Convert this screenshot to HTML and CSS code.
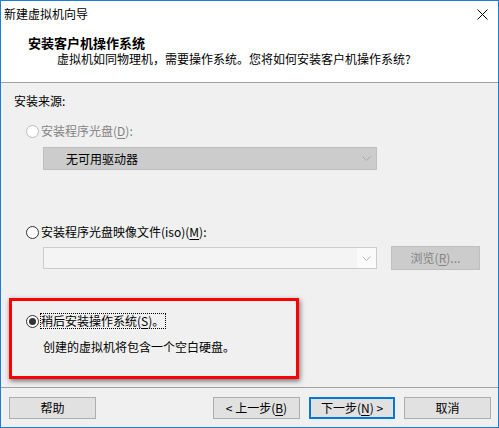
FILE: index.html
```html
<!DOCTYPE html>
<html lang="zh-CN">

<head>
    <meta charset="UTF-8">
    <title>新建虚拟机向导</title>
    <link rel="stylesheet" href="styles.css">
</head>

<body>
    <div class="window">
        <div class="titlebar">
            <span class="title">新建虚拟机向导</span>
            <svg class="close" width="11" height="11" viewBox="0 0 11 11">
                <path d="M0.5 0.5L10.5 10.5M10.5 0.5L0.5 10.5" stroke="#000" stroke-width="1" fill="none" />
            </svg>
        </div>
        <div class="header">
            <div class="heading">安装客户机操作系统</div>
            <div class="subheading">虚拟机如同物理机，需要操作系统。您将如何安装客户机操作系统?</div>
        </div>

        <div class="content">
            <div class="label">安装来源:</div>

            <div class="option option-disc disabled">
                <span class="radio"></span>
                <span>安装程序光盘(<u>D</u>):</span>
            </div>
            <div class="combo combo-off">
                <span class="combo-text">无可用驱动器</span>
                <svg class="chevron" width="9" height="5" viewBox="0 0 9 5">
                    <path d="M0.5 0.5L4.5 4.5L8.5 0.5" stroke="#a8a8a8" fill="none" />
                </svg>
            </div>

            <div class="option option-iso">
                <span class="radio"></span>
                <span>安装程序光盘映像文件(iso)(<u>M</u>):</span>
            </div>
            <div class="file-row">
                <div class="combo combo-edit">
                    <span class="field"></span>
                    <span class="drop">
                        <svg class="chevron" width="9" height="5" viewBox="0 0 9 5">
                            <path d="M0.5 0.5L4.5 4.5L8.5 0.5" stroke="#b4b4b4" fill="none" />
                        </svg>
                    </span>
                </div>
                <button class="btn btn-off">浏览(<u>R</u>)...</button>
            </div>

            <div class="later">
                <div class="option option-later">
                    <span class="radio checked"></span>
                    <span class="focus">稍后安装操作系统(<u>S</u>)。</span>
                </div>
                <div class="desc">创建的虚拟机将包含一个空白硬盘。</div>
            </div>
        </div>

        <div class="footer">
            <button class="btn">帮助</button>
            <div class="nav">
                <button class="btn">&lt; 上一步(<u>B</u>)</button>
                <button class="btn btn-default">下一步(<u>N</u>) &gt;</button>
                <button class="btn">取消</button>
            </div>
        </div>
    </div>
</body>

</html>
```

FILE: styles.css
```css
body {
    margin: 0;
    background-color: #ffffff;
}
.window {
    width: 499px;
    height: 428px;
    box-sizing: border-box;
    border: 1px solid #1a7fd4;
    background-color: #f0f0f0;
    font-family: "Noto Sans CJK SC", "Noto Sans", sans-serif;
    font-size: 12px;
    line-height: 16px;
    color: #000;
    display: flex;
    flex-direction: column;
}
u {
    text-decoration-thickness: 1px;
    text-underline-offset: 2px;
}

.titlebar {
    height: 30px;
    background-color: #fff;
    display: flex;
    justify-content: space-between;
    align-items: flex-start;
}
.title {
    margin: 5px 0 0 3px;
}
.close {
    margin: 8px 10px 0 0;
}

.header {
    height: 51px;
    background-color: #fff;
    border-bottom: 1px solid #a0a0a0;
}
.heading {
    margin: 4px 0 0 27px;
    font-size: 13px;
    font-weight: bold;
}
.subheading {
    margin: 0 0 0 56px;
}

.content {
    height: 304px;
    padding-left: 8px;
    box-sizing: border-box;
    display: flex;
    flex-direction: column;
    align-items: flex-start;
}
.label {
    margin: 10px 0 0 5px;
}

.option {
    display: flex;
    align-items: center;
    gap: 2px;
    margin-left: 17px;
}
.option.disabled {
    color: #838383;
}
.option-disc {
    margin-top: 14px;
}
.option-iso {
    margin-top: 54px;
}
.radio {
    width: 13px;
    height: 13px;
    box-sizing: border-box;
    border: 1px solid #333;
    border-radius: 50%;
    background-color: #fff;
    position: relative;
}
.disabled .radio {
    border-color: #bcbcbc;
}
.radio.checked::after {
    content: "";
    position: absolute;
    left: 2px;
    top: 2px;
    width: 7px;
    height: 7px;
    border-radius: 50%;
    background-color: #333;
}

.combo {
    width: 334px;
    box-sizing: border-box;
    margin-left: 34px;
    display: flex;
    align-items: center;
}
.combo-off {
    margin-top: 8px;
    height: 23px;
    background-color: #cccccc;
    border: 1px solid #bfbfbf;
    justify-content: space-between;
}
.combo-text {
    margin-left: 22px;
}
.combo-off .chevron {
    margin-right: 5px;
}

.file-row {
    margin-top: 6px;
    height: 24px;
    display: flex;
    align-items: center;
    gap: 14px;
}
.combo-edit {
    height: 22px;
    border: 1px solid #cccccc;
    background-color: #f4f4f4;
}
.field {
    flex: 1;
}
.drop {
    width: 19px;
    height: 20px;
    background-color: #fafafa;
    display: flex;
    align-items: center;
    justify-content: center;
}

.btn {
    width: 87px;
    height: 22px;
    padding: 0;
    box-sizing: border-box;
    border: 1px solid #adadad;
    background-color: #e1e1e1;
    font-family: inherit;
    font-size: 12px;
    line-height: 16px;
    color: #000;
}
.btn-off {
    width: 89px;
    height: 24px;
    background-color: #cccccc;
    border-color: #bfbfbf;
    color: #838383;
}
.btn-default {
    width: 86px;
    border: 2px solid #0078d7;
}

.later {
    margin-top: 28px;
    width: 290px;
    height: 81px;
    box-sizing: border-box;
    border: 3px solid #ff0000;
    box-shadow: 1px 2px 5px rgba(0, 0, 0, 0.55);
    padding: 13px 0 0 14px;
}
.option-later {
    margin-left: 0;
}
.focus {
    outline: 1px dotted #000;
    line-height: 14px;
    padding: 0 1px 0 0;
}
.desc {
    margin: 11px 0 0 17px;
}

.footer {
    flex: 1;
    border-top: 1px solid #a0a0a0;
    padding: 9px 7px 0 8px;
    display: flex;
    justify-content: space-between;
    align-items: flex-start;
}
.nav {
    display: flex;
    gap: 9px;
}
```
